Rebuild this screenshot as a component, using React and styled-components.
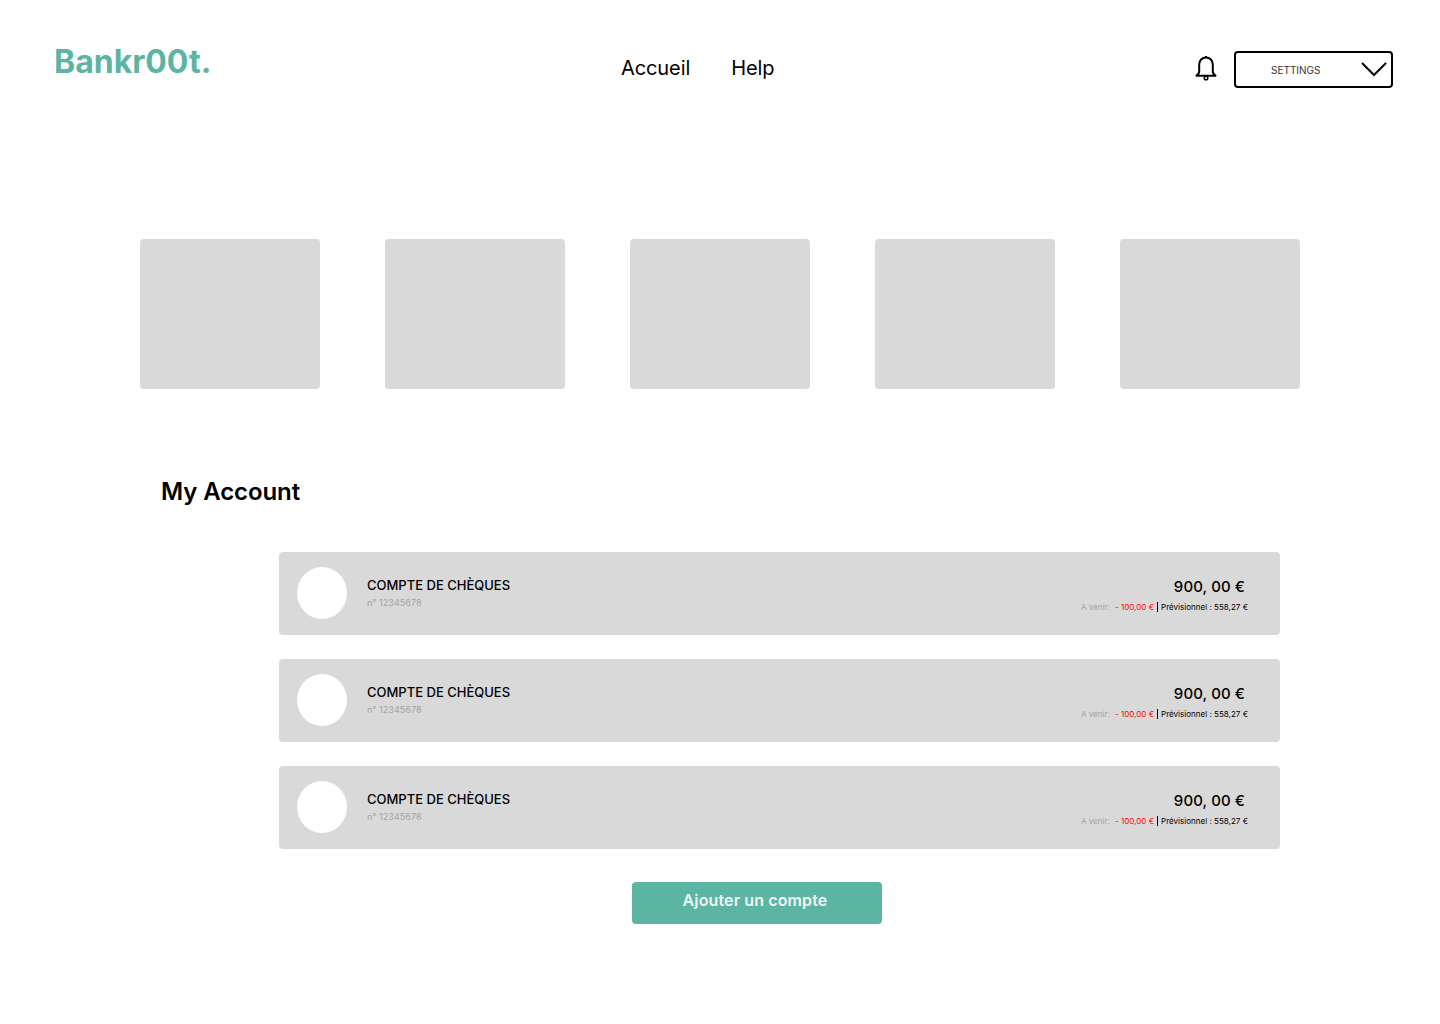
import React from 'react';
import styled, { createGlobalStyle } from 'styled-components';

const GlobalStyle = createGlobalStyle`
    html, body {
        margin: 0;
        padding: 0;
        background: #fff;
        font-family: Inter, "Liberation Sans", sans-serif;
    }
    * {
        box-sizing: border-box;
    }
`;

const Page = styled.div`
    width: 1440px;
    height: 1024px;
    overflow: hidden;
    background: #fff;
`;

const Header = styled.header`
    display: flex;
    align-items: flex-start;
    height: 239px;
    padding: 42px 47px 0 54px;
`;

const Logo = styled.div`
    width: 567px;
    font-size: 32px;
    line-height: 39px;
    font-weight: 700;
    color: #5cb5a2;
`;

const Nav = styled.nav`
    display: flex;
    gap: 41px;
    margin-top: 14px;
    font-size: 20px;
    line-height: 24px;
    letter-spacing: -0.1px;
    color: #000;
`;

const NavLink = styled.a`
    color: inherit;
    text-decoration: none;
`;

const HeaderRight = styled.div`
    display: flex;
    align-items: center;
    margin-left: auto;
    margin-top: 9px;
    gap: 16px;
`;

const Bell = styled.svg`
    margin-top: -2px;
`;

const Settings = styled.div`
    display: flex;
    align-items: center;
    width: 159px;
    height: 37px;
    padding: 0 4px 0 35px;
    border: 2px solid #000;
    border-radius: 4px;
    background: #fff;
`;

const SettingsLabel = styled.span`
    font-size: 10px;
    line-height: 12px;
    color: #333;
`;

const Chevron = styled.svg`
    margin-left: auto;
`;

const Tiles = styled.section`
    display: flex;
    gap: 65px;
    padding-left: 140px;
`;

const Tile = styled.div`
    width: 180px;
    height: 150px;
    border-radius: 4px;
    background: #d9d9d9;
`;

const Title = styled.h1`
    margin: 73px 0 0 161px;
    font-size: 24px;
    line-height: 59px;
    font-weight: 600;
    letter-spacing: -0.1px;
    color: #000;
`;

const Accounts = styled.section`
    display: flex;
    flex-direction: column;
    gap: 24px;
    width: 1001px;
    margin: 31px 0 0 279px;
`;

const Account = styled.article`
    display: flex;
    align-items: center;
    height: 83px;
    padding: 0 32px 0 18px;
    border-radius: 4px;
    background: #d9d9d9;
`;

const Avatar = styled.div`
    width: 50px;
    height: 52px;
    margin-top: -1px;
    border-radius: 50%;
    background: #fff;
`;

const Info = styled.div`
    display: flex;
    flex-direction: column;
    gap: 4px;
    margin: -3px 0 0 20px;
`;

const Name = styled.div`
    font-size: 13px;
    line-height: 16px;
    font-weight: 500;
    color: #000;
`;

const Number = styled.div`
    font-size: 9px;
    line-height: 11px;
    letter-spacing: 0.05px;
    color: #a3a3a3;
`;

const Balance = styled.div`
    display: flex;
    flex-direction: column;
    align-items: flex-end;
    gap: 6px;
    margin: 2px 0 0 auto;
`;

const Amount = styled.div`
    margin-right: 3px;
    font-size: 15px;
    line-height: 19px;
    font-weight: 500;
    letter-spacing: 0.1px;
    color: #000;
`;

const Details = styled.div`
    display: flex;
    align-items: center;
    font-size: 8px;
    line-height: 10px;
    letter-spacing: 0.02px;
    color: #000;
`;

const Upcoming = styled.span`
    margin-right: 5px;
    color: #a3a3a3;
`;

const Negative = styled.span`
    color: #ff0000;
`;

const Divider = styled.span`
    width: 1px;
    height: 10px;
    margin: 0 3px;
    background: #000;
`;

const AddButton = styled.button`
    display: block;
    width: 250px;
    height: 42px;
    margin: 33px 0 0 632px;
    padding: 0 4px 7px 0;
    border: 0;
    border-radius: 4px;
    background: #5cb5a2;
    color: #eef6f4;
    font-family: inherit;
    font-size: 16px;
    font-weight: 600;
    letter-spacing: 0.12px;
`;

const tiles = [1, 2, 3, 4, 5];
const accounts = [1, 2, 3];

const App = () => {
    return (
        <Page>
            <GlobalStyle />
            <Header>
                <Logo>Bankr00t.</Logo>
                <Nav>
                    <NavLink href="#">Accueil</NavLink>
                    <NavLink href="#">Help</NavLink>
                </Nav>
                <HeaderRight>
                    <Bell width="24" height="27" viewBox="0 0 24 27" fill="none" stroke="#000" strokeWidth="2" strokeLinejoin="round">
                        <path d="M12 2.5C8 2.5 5.2 5.5 5.2 9.5V16C5.2 18 4.5 19.5 2.5 20.7H21.5C19.5 19.5 18.8 18 18.8 16V9.5C18.8 5.5 16 2.5 12 2.5Z" />
                        <circle cx="12" cy="23" r="1.8" strokeWidth="1.5" />
                        <path d="M12 1V2.5" />
                    </Bell>
                    <Settings>
                        <SettingsLabel>SETTINGS</SettingsLabel>
                        <Chevron width="26" height="15" viewBox="0 0 26 15" fill="none" stroke="#000" strokeWidth="2">
                            <path d="M1 1L13 13L25 1" />
                        </Chevron>
                    </Settings>
                </HeaderRight>
            </Header>
            <Tiles>
                {tiles.map((tile) => (
                    <Tile key={tile} />
                ))}
            </Tiles>
            <Title>My Account</Title>
            <Accounts>
                {accounts.map((account) => (
                    <Account key={account}>
                        <Avatar />
                        <Info>
                            <Name>COMPTE DE CHÈQUES</Name>
                            <Number>n° 12345678</Number>
                        </Info>
                        <Balance>
                            <Amount>900, 00 €</Amount>
                            <Details>
                                <Upcoming>A venir:</Upcoming>
                                <Negative>- 100,00 €</Negative>
                                <Divider />
                                Prévisionnel : 558,27 €
                            </Details>
                        </Balance>
                    </Account>
                ))}
            </Accounts>
            <AddButton>Ajouter un compte</AddButton>
        </Page>
    );
};

export default App;
